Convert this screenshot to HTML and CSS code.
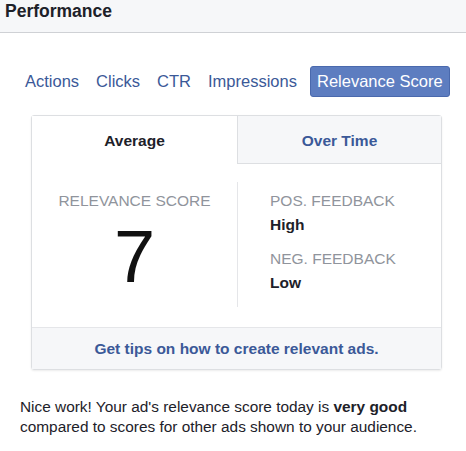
FILE: index.html
```html
<!DOCTYPE html>
<html lang="en">
<head>
    <meta charset="UTF-8">
    <meta name="viewport" content="width=device-width, initial-scale=1.0">
    <title>Performance</title>
    <link rel="stylesheet" href="styles.css">
</head>
<body>
    <div class="header">Performance</div>

    <div class="tabs">
        <a class="tab">Actions</a>
        <a class="tab">Clicks</a>
        <a class="tab">CTR</a>
        <a class="tab">Impressions</a>
        <a class="tab tab-on">Relevance Score</a>
    </div>

    <div class="card">
        <div class="card-tabs">
            <div class="ctab ctab-on">Average</div>
            <div class="ctab">Over Time</div>
        </div>
        <div class="card-body">
            <div class="score">
                <div class="label">RELEVANCE SCORE</div>
                <div class="big">7</div>
            </div>
            <div class="feedback">
                <div class="label">POS. FEEDBACK</div>
                <div class="value">High</div>
                <div class="label neg">NEG. FEEDBACK</div>
                <div class="value">Low</div>
            </div>
        </div>
        <div class="card-foot">Get tips on how to create relevant ads.</div>
    </div>

    <p class="note">Nice work! Your ad's relevance score today is <b>very good</b> compared to scores for other ads shown to your audience.</p>
</body>
</html>
```

FILE: styles.css
```css
body{
    margin: 0;
    font-family: "Liberation Sans", Arial, sans-serif;
    color: #1d2129;
    background-color: white;
}
.header{
    height: 32px;
    padding-left: 5px;
    background-color: #f6f7f9;
    border-bottom: 1px solid #cfd1d5;
    font-size: 17.5px;
    font-weight: bold;
    line-height: 22px;
}
.tabs{
    display: flex;
    align-items: center;
    gap: 17px;
    margin-top: 33px;
    padding-left: 25px;
    font-size: 16.5px;
}
.tab{
    color: #3b5998;
    line-height: 31px;
}
.tab-on{
    margin-left: -4px;
    padding: 0 6px;
    height: 29px;
    line-height: 29px;
    color: white;
    background-color: #5d7dc0;
    border: 1px solid #4a69ad;
    border-radius: 3px;
}
.card{
    box-sizing: border-box;
    width: 411px;
    margin: 18px 0 0 31px;
    border: 1px solid #dddfe2;
    border-radius: 3px;
    box-shadow: 0 1px 2px rgba(0, 0, 0, 0.08);
}
.card-tabs{
    display: grid;
    grid-template-columns: 205px 1fr;
    height: 48px;
}
.ctab{
    padding-top: 3px;
    text-align: center;
    line-height: 44px;
    font-size: 15.5px;
    font-weight: bold;
    color: #3b5998;
    background-color: #f6f7f9;
    border-left: 1px solid #dddfe2;
    border-bottom: 1px solid #dddfe2;
}
.ctab-on{
    color: #1d2129;
    background-color: white;
    border: none;
}
.card-body{
    display: grid;
    grid-template-columns: 205px 1fr;
    padding: 18px 0 20px;
}
.score{
    text-align: center;
}
.label{
    font-size: 15.5px;
    line-height: 18px;
    color: #90949c;
}
.score .label{
    margin-top: 10px;
}
.big{
    margin-top: 7px;
    font-size: 74px;
    line-height: 80px;
    color: #111;
}
.feedback{
    height: 125px;
    padding-left: 32px;
    border-left: 1px solid #e5e6e9;
}
.feedback .label{
    margin-top: 10px;
}
.feedback .neg{
    margin-top: 16px;
}
.value{
    margin-top: 6px;
    font-size: 15.5px;
    line-height: 18px;
    font-weight: bold;
    color: #1d2129;
}
.card-foot{
    height: 41px;
    line-height: 41px;
    text-align: center;
    font-size: 15.5px;
    font-weight: bold;
    color: #3b5998;
    background-color: #f6f7f9;
    border-top: 1px solid #e5e6e9;
}
.note{
    margin: 27px 0 0 20px;
    width: 430px;
    font-size: 15.4px;
    line-height: 20px;
    color: #1d2129;
}
```
